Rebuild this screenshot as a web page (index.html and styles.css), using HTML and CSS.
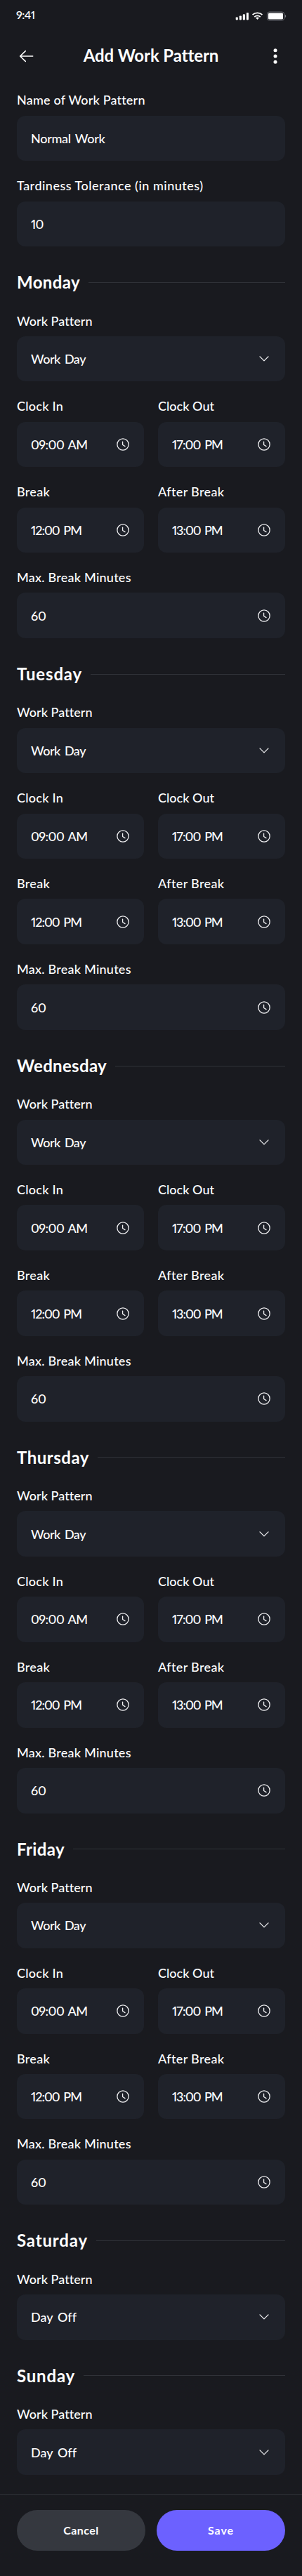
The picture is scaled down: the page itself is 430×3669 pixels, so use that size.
FILE: index.html
```html
<!DOCTYPE html>
<html lang="en">
<head>
<meta charset="utf-8">
<title>Add Work Pattern</title>
<link rel="stylesheet" href="styles.css">
</head>
<body>
<svg class="sprite" aria-hidden="true">
  <symbol id="chevron" viewBox="0 0 20 20"><path d="M4 6.900l6 6 6-6"/></symbol>
  <symbol id="clock" viewBox="0 0 20 20"><circle cx="10" cy="10" r="8.150"/><path d="M9.600 6.100v4.400l3.400 2.100"/></symbol>
</svg>
<div class="screen">
  <div class="status">
    <span class="time" data-width="26.5">9:41</span>
    <svg class="indicators" width="72" height="14" viewBox="0 0 72 14">
      <g fill="#fff">
        <g transform="translate(0 .4)"><rect x="0.7" y="8" width="3.1" height="4" rx="0.8"/><rect x="5.8" y="6" width="3.1" height="6" rx="0.8"/>
        <rect x="10.8" y="3.8" width="3.1" height="8.2" rx="0.8"/><rect x="15.9" y="1.5" width="3" height="10.5" rx="0.8"/></g>
        <path d="M31.5 12l-2.4-2.4a3.5 3.5 0 0 1 4.8 0z"/>
      </g>
      <g fill="none" stroke="#fff" stroke-width="1.8"><path d="M24.6 5a10.2 10.2 0 0 1 13.8 0"/><path d="M27.3 8.1a6.2 6.2 0 0 1 8.400 0"/></g>
      <rect x="45.4" y="1" width="24.2" height="12" rx="3" fill="none" stroke="#666970"/>
      <rect x="47" y="2.500" width="21" height="9" rx="1.6" fill="#fff"/>
      <path d="M70.900 5v4c1-.4 1.300-1.200 1.300-2s-.3-1.600-1.300-2z" fill="#777a80"/>
    </svg>
  </div>
  <header class="topbar">
    <svg class="back" width="28" height="28" viewBox="0 0 28 28"><path d="M22.700 14H4.800M12.300 6.600L4.600 14l7.700 7.400"/></svg>
    <h1 data-width="191.5">Add Work Pattern</h1>
    <svg class="more" width="28" height="28" viewBox="0 0 28 28"><circle cx="14" cy="5.700" r="2.500"/><circle cx="14" cy="14" r="2.500"/><circle cx="14" cy="22.200" r="2.500"/></svg>
  </header>
  <main class="form" id="form"></main>
  <footer class="actions">
    <button class="btn cancel"><span data-width="50.5">Cancel</span></button>
    <button class="btn save"><span data-width="37">Save</span></button>
  </footer>
</div>
<script src="app.js"></script>
</body>
</html>
```
FILE: styles.css
```css
* { box-sizing: border-box; }
body { margin: 0; background: #191a1f; color: #fff; font-family: Lato, "Open Sans", sans-serif; font-variant-numeric: proportional-nums; }
.sprite { position: absolute; width: 0; height: 0; }
.screen { width: 430px; height: 3669px; display: flex; flex-direction: column; overflow: hidden; }
.status { height: 44px; flex: none; display: flex; justify-content: space-between; align-items: flex-start; padding: 10px 23px 0; }
.time { font-size: 16px; line-height: 21px; font-weight: 500; white-space: nowrap; }
.indicators { margin-top: 5.500px; overflow: visible; }
.topbar { height: 72px; flex: none; display: flex; align-items: center; justify-content: space-between; padding: 0 24px; }
.back { fill: none; stroke: #fff; stroke-width: 1.500; stroke-linecap: round; stroke-linejoin: round; }
.more { fill: #fff; }
h1 { margin: 0; padding-bottom: 2px; font-size: 24px; line-height: 38px; font-weight: 700; white-space: nowrap; }
.form { flex: none; padding: 15.470px 24px 0; display: flex; flex-direction: column; gap: 24px; }
.day { display: flex; flex-direction: column; gap: 24px; }
.day-head { display: flex; align-items: center; gap: 12px; height: 38.400px; margin: 8px 0 0; }
.day-head h2 { margin: 0; padding-bottom: 1px; font-size: 24px; line-height: 37.400px; font-weight: 700; white-space: nowrap; }
.rule { flex: 1; height: 1px; background: #303238; }
.row { display: grid; grid-template-columns: 1fr 1fr; gap: 20px; }
.field { display: flex; flex-direction: column; align-items: stretch; gap: 8px; }
.label { height: 25.270px; font-size: 18px; line-height: 22.800px; font-weight: 500; white-space: nowrap; }
.control { height: 64.600px; border-radius: 12px; background: #1f222a; padding: 0 20px; display: flex; align-items: center; justify-content: space-between; }
.value { font-size: 18px; line-height: 28px; font-weight: 500; white-space: nowrap; word-spacing: 2px; }
.icon { width: 20px; height: 20px; fill: none; stroke: #f0f0f2; stroke-width: 1.300; stroke-linecap: round; stroke-linejoin: round; }
.actions { flex: none; margin-top: auto; height: 117.500px; border-top: 1px solid #303238; padding: 22.500px 24px 0; display: grid; grid-template-columns: 1fr 1fr; gap: 16px; align-items: start; }
.btn { height: 58px; border: 0; border-radius: 29px; color: #fff; font-family: inherit; font-size: 16px; line-height: 22px; font-weight: 700; }
.cancel { background: #35383f; }
.save { background: #6c61ff; }
```
FILE: app.js
```javascript
// Set width of each string in px; tracking is derived from it.
const widths = {
  'Name of Work Pattern': 182, 'Tardiness Tolerance (in minutes)': 265.5,
  'Work Pattern': 107, 'Clock In': 66, 'Clock Out': 80, 'Break': 47,
  'After Break': 94, 'Max. Break Minutes': 162.7,
  'Normal Work': 105.5, '10': 17.5, 'Work Day': 78, 'Day Off': 64.5,
  '09:00 AM': 80.5, '17:00 PM': 72, '12:00 PM': 72, '13:00 PM': 71.5, '60': 21.5,
  'Monday': 90, 'Tuesday': 93, 'Wednesday': 128, 'Thursday': 103,
  'Friday': 68, 'Saturday': 101, 'Sunday': 83
};

const text = (s) => `<span data-width="${widths[s]}">${s}</span>`;

const field = (label, value, icon) => `
  <div class="field">
    <div class="label">${text(label)}</div>
    <div class="control"><div class="value">${text(value)}</div>${icon ? `<svg class="icon"><use href="#${icon}"/></svg>` : ''}</div>
  </div>`;

const day = (name, off) => `
  <section class="day">
    <div class="day-head"><h2>${text(name)}</h2><div class="rule"></div></div>
    ${field('Work Pattern', off ? 'Day Off' : 'Work Day', 'chevron')}
    ${off ? '' : `
    <div class="row">${field('Clock In', '09:00 AM', 'clock')}${field('Clock Out', '17:00 PM', 'clock')}</div>
    <div class="row">${field('Break', '12:00 PM', 'clock')}${field('After Break', '13:00 PM', 'clock')}</div>
    ${field('Max. Break Minutes', '60', 'clock')}`}
  </section>`;

document.getElementById('form').innerHTML =
  field('Name of Work Pattern', 'Normal Work') +
  field('Tardiness Tolerance (in minutes)', '10') +
  ['Monday', 'Tuesday', 'Wednesday', 'Thursday', 'Friday'].map(n => day(n, false)).join('') +
  ['Saturday', 'Sunday'].map(n => day(n, true)).join('');

document.querySelectorAll('[data-width]').forEach((el) => {
  const gap = Number(el.dataset.width) - el.getBoundingClientRect().width;
  el.style.letterSpacing = `${(gap / el.textContent.length).toFixed(3)}px`;
});
```
